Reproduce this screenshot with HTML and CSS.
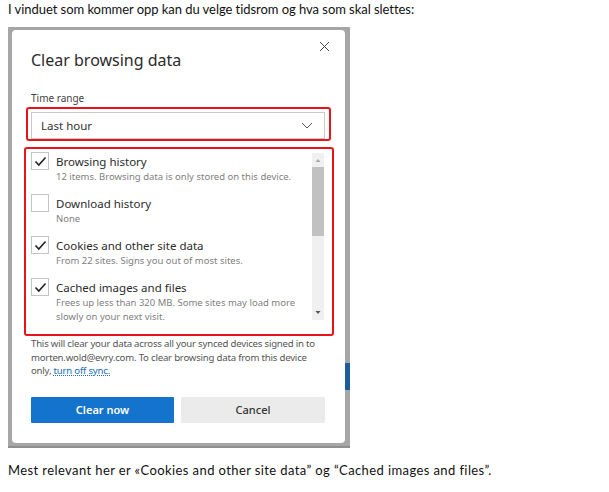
FILE: index.html
```html
<!DOCTYPE html>
<html lang="no">
<head>
<meta charset="utf-8">
<title>Clear browsing data</title>
<link rel="stylesheet" href="styles.css">
</head>
<body>
<div class="page">
  <p class="doc-text intro">I vinduet som kommer opp kan du velge tidsrom og hva som skal slettes:</p>
  <div class="shot">
    <div class="dialog">
      <div class="header">
        <h1 class="title">Clear browsing data</h1>
        <svg class="close" width="11" height="11" viewBox="0 0 11 11"><path d="M1 1 L10 10 M10 1 L1 10" stroke="#444" stroke-width="1" fill="none"/></svg>
      </div>
      <div class="label">Time range</div>
      <div class="mark mark-select">
        <div class="select">
          <span>Last hour</span>
          <svg class="chev" width="12" height="7" viewBox="0 0 12 7"><path d="M1 1 L6 6 L11 1" stroke="#555" stroke-width="1" fill="none"/></svg>
        </div>
      </div>
      <div class="mark mark-list">
        <div class="items">
          <div class="item">
            <span class="cb"><svg width="13" height="11" viewBox="0 0 13 11"><path d="M1.5 5.5 L4.8 9 L11.5 1.5" stroke="#222" stroke-width="1.6" fill="none"/></svg></span>
            <div class="txt">
              <div class="it-title">Browsing history</div>
              <div class="it-sub">12 items. Browsing data is only stored on this device.</div>
            </div>
          </div>
          <div class="item">
            <span class="cb"></span>
            <div class="txt">
              <div class="it-title">Download history</div>
              <div class="it-sub">None</div>
            </div>
          </div>
          <div class="item">
            <span class="cb"><svg width="13" height="11" viewBox="0 0 13 11"><path d="M1.5 5.5 L4.8 9 L11.5 1.5" stroke="#222" stroke-width="1.6" fill="none"/></svg></span>
            <div class="txt">
              <div class="it-title">Cookies and other site data</div>
              <div class="it-sub">From 22 sites. Signs you out of most sites.</div>
            </div>
          </div>
          <div class="item">
            <span class="cb"><svg width="13" height="11" viewBox="0 0 13 11"><path d="M1.5 5.5 L4.8 9 L11.5 1.5" stroke="#222" stroke-width="1.6" fill="none"/></svg></span>
            <div class="txt">
              <div class="it-title">Cached images and files</div>
              <div class="it-sub">Frees up less than 320 MB. Some sites may load more slowly on your next visit.</div>
            </div>
          </div>
        </div>
        <div class="scrollbar">
          <svg class="arrow" width="12" height="14" viewBox="0 0 12 14"><path d="M3.5 9 L6 6 L8.5 9 Z" fill="#a8a8a8"/></svg>
          <div class="thumb"></div>
          <div class="track-rest"></div>
          <svg class="arrow" width="12" height="14" viewBox="0 0 12 14"><path d="M3.5 5 L6 8 L8.5 5 Z" fill="#555"/></svg>
        </div>
      </div>
      <p class="sync">This will clear your data across all your synced devices signed in to morten.wold@evry.com. To clear browsing data from this device only, <a class="link">turn off sync.</a></p>
      <div class="buttons">
        <button class="btn primary">Clear now</button>
        <button class="btn secondary">Cancel</button>
      </div>
    </div>
  </div>
  <p class="doc-text outro">Mest relevant her er «Cookies and other site data” og “Cached images and files”.</p>
</div>
</body>
</html>
```

FILE: styles.css
```css
* { box-sizing: border-box; }
html, body { margin: 0; padding: 0; background: #fff; }
.page { padding: 0 8px; }

.doc-text {
  margin: 0;
  font-family: "Lato", "Liberation Sans", sans-serif;
  font-size: 13px;
  line-height: 17px;
  color: #111;
}
.intro { padding-top: 1px; letter-spacing: -0.05px; }
.outro { margin-top: 14px; letter-spacing: 0.4px; }

.shot {
  margin-top: 9px;
  width: 342px;
  height: 421px;
  padding: 3px 5px 5px 4px;
  background:
    linear-gradient(#1d5c9b, #1d5c9b) no-repeat right 0 top 336px / 5px 27px,
    linear-gradient(#8f8f8f, #8f8f8f) no-repeat left 0 bottom 0 / 100% 2px,
    #a6a6a6;
}

.dialog {
  width: 333px;
  height: 413px;
  background: #fff;
  border-radius: 4px;
  padding: 0 20px 0 19px;
  font-family: "Noto Sans", "Open Sans", sans-serif;
  color: #333;
  display: flex;
  flex-direction: column;
}

.header {
  display: flex;
  justify-content: space-between;
  align-items: flex-start;
}
.title {
  margin: 18px 0 0;
  font-size: 16px;
  line-height: 24px;
  font-weight: 400;
  color: #2b2b2b;
}
.close { margin-top: 11px; margin-right: -5px; }

.label {
  margin-top: 19px;
  font-size: 10px;
  line-height: 14px;
  color: #444;
}

.mark {
  border: 2px solid #e8141a;
  border-radius: 3px;
}
.mark-select {
  margin: 2px -6px 0 -5px;
  padding: 3px 4px 0 3px;
}
.select {
  height: 27px;
  border: 1px solid #c9c9c9;
  display: flex;
  align-items: center;
  justify-content: space-between;
  padding: 0 11px 0 9px;
  font-size: 11.5px;
  color: #333;
}

.mark-list {
  margin: 6px -9px 0 -7px;
  height: 189px;
  padding: 3px 8px 0 5px;
  display: flex;
  align-items: flex-start;
}
.items { flex: 1; }
.item {
  display: flex;
  gap: 7px;
  margin-bottom: 10px;
}
.cb {
  flex: none;
  width: 18px;
  height: 18px;
  border: 1px solid #c4c4c4;
  display: flex;
  align-items: center;
  justify-content: center;
}
.txt { padding-top: 2px; width: 240px; }
.it-title {
  font-size: 11.5px;
  line-height: 16px;
  color: #2b2b2b;
}
.it-sub {
  font-size: 9.5px;
  line-height: 14px;
  color: #808080;
}

.scrollbar {
  flex: none;
  margin-top: 1px;
  width: 12px;
  height: 167px;
  background: #f0f0f0;
  display: flex;
  flex-direction: column;
}
.arrow { display: block; flex: none; }
.thumb { height: 69px; background: #c1c1c1; }
.track-rest { flex: 1; }

.sync {
  margin: 1px 0 0;
  font-size: 9.6px;
  letter-spacing: -0.2px;
  line-height: 13.5px;
  color: #555;
}
.link {
  color: #1a6fb8;
  text-decoration: underline dotted;
  text-underline-offset: 1px;
}

.buttons {
  margin-top: 19px;
  display: flex;
  gap: 7px;
}
.btn {
  height: 26px;
  width: 143px;
  border: none;
  border-radius: 1px;
  font-family: "Noto Sans", "Open Sans", sans-serif;
  font-size: 11px;
  font-weight: 600;
}
.primary { background: #1473cc; color: #fff; }
.secondary { background: #ebebeb; color: #333; width: 144px; font-weight: 500; }
```
